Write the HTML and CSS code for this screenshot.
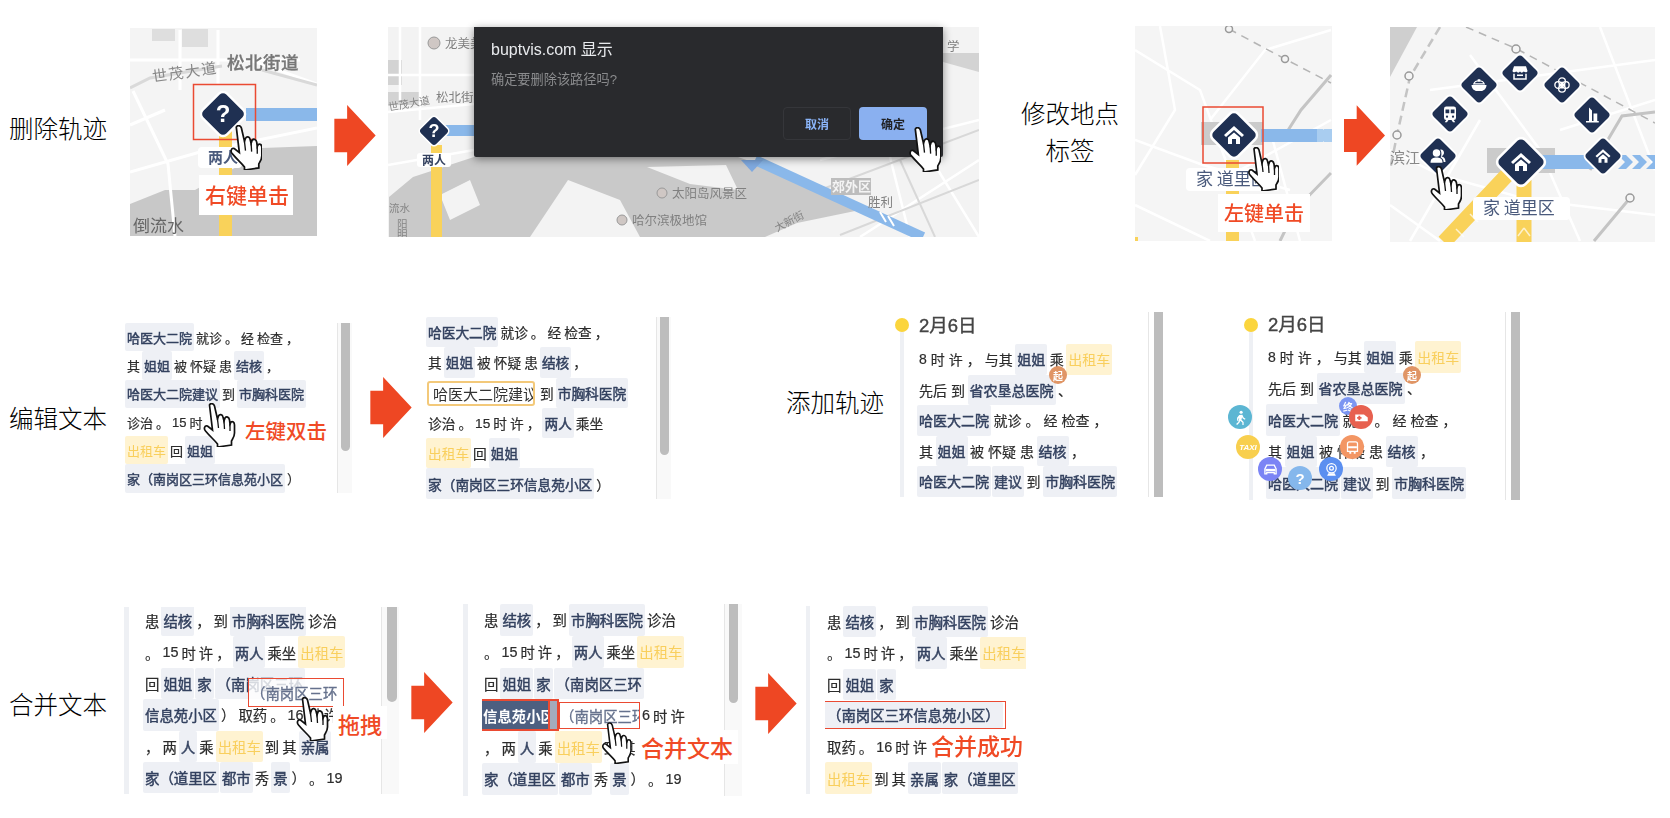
FILE: index.html
```html
<!DOCTYPE html>
<html lang="zh">
<head>
<meta charset="utf-8">
<title>交互说明</title>
<link rel="stylesheet" href="styles.css">
</head>
<body>
<svg class="defs" aria-hidden="true">
  <symbol id="hand" viewBox="0 0 32 44"><path d="M7 2C8 0 11 0 12 3L15 16 16 13C17 11 20 11 20.500 14L21.500 18 22.500 15C24 13 26.500 14 27 17L27.500 21 28.500 19C30 18 32 19 32 22V30C32 34 30 36 29 38V42L15 44V41C12 37 8 34 3 28 1 26 2 22 5 23L10 27Z" fill="#fff" stroke="#111" stroke-width="1.700"/><path d="M15 16 16 25M21.500 18 22 26M27.500 21V28" fill="none" stroke="#111" stroke-width="1.300"/></symbol>
  <symbol id="arrow" viewBox="0 0 42 62"><polygon points="0,14 13,14 13,0 42,31 13,62 13,48 0,48" fill="#ee4723"/></symbol>
  <symbol id="dm" viewBox="-25 -25 50 50"><rect x="-18" y="-18" width="36" height="36" rx="6" transform="rotate(45)" fill="#1f3052" stroke="#fff" stroke-width="2.500"/></symbol>
  <symbol id="i-home" viewBox="0 0 24 24"><path d="M12 3 2 12 4 14 12 7 20 14 22 12ZM6 14.500 12 9.500 18 14.500V21H14V16H10V21H6Z" fill="#fff"/></symbol>
  <symbol id="i-train" viewBox="0 0 24 24"><path d="M7 2H17A3 3 0 0 1 20 5V17A3 3 0 0 1 17 20H7A3 3 0 0 1 4 17V5A3 3 0 0 1 7 2Z" fill="#fff"/><path d="M6 6H11V11H6ZM13 6H18V11H13Z" fill="#1f3052"/><circle cx="8" cy="15.500" r="1.500" fill="#1f3052"/><circle cx="16" cy="15.500" r="1.500" fill="#1f3052"/><path d="M7 20H10L8 23H5ZM14 20H17L19 23H16Z" fill="#fff"/></symbol>
  <symbol id="i-bowl" viewBox="0 0 24 24"><path d="M2 12H22C22 17 18 20 15 20H9C6 20 2 17 2 12Z" fill="#fff"/><path d="M5 10.500C7 5 17 5 19 10.500ZM11 5H13V7H11Z" fill="none" stroke="#fff" stroke-width="1.500"/></symbol>
  <symbol id="i-shop" viewBox="0 0 24 24"><path d="M4 3H20L22 9C22 11 19 12 17 10 15 12 13.500 12 12 10 10.500 12 9 12 7 10 5 12 2 11 2 9Z" fill="#fff"/><path d="M4 13V20H20V13" fill="none" stroke="#fff" stroke-width="2"/><path d="M8 14H16V16H8Z" fill="#fff"/></symbol>
  <symbol id="i-cross" viewBox="0 0 24 24"><circle cx="12" cy="7" r="4.500" fill="none" stroke="#fff" stroke-width="1.800"/><circle cx="12" cy="17" r="4.500" fill="none" stroke="#fff" stroke-width="1.800"/><circle cx="7" cy="12" r="4.500" fill="none" stroke="#fff" stroke-width="1.800"/><circle cx="17" cy="12" r="4.500" fill="none" stroke="#fff" stroke-width="1.800"/><path d="M10.500 7.500H13.500V10.500H16.500V13.500H13.500V16.500H10.500V13.500H7.500V10.500H10.500Z" fill="#fff"/></symbol>
  <symbol id="i-build" viewBox="0 0 24 24"><path d="M8 2 12 6V20H8ZM14 10H19V20H14ZM4 20H21V22H4Z" fill="#fff"/></symbol>
  <symbol id="i-people" viewBox="0 0 24 24"><circle cx="10" cy="8" r="5" fill="#fff"/><path d="M2 21C2 15 6 14 10 14S18 15 18 21Z" fill="#fff"/><path d="M15 3.500C18 3 20 5 20 8 20 10 18 12 16.500 12.500 20 13 22 15 22 20H19.500C19.500 17 18 15 15.500 13.500 17 11.500 17 6 15 3.500Z" fill="#fff"/></symbol>
  <symbol id="i-walk" viewBox="0 0 24 24"><circle cx="13" cy="3.500" r="2.500" fill="#fff"/><path d="M10 8 15 7.500 17 12 20 14 19 15.500 15.500 13.500 14.500 11.500 13.500 15.500 17 19V24H15V20L11.500 17 10.500 20 6.500 24 5 22.500 8.500 19 10 13 8.500 14V17H6.500V12.500Z" fill="#fff"/></symbol>
  <symbol id="i-car" viewBox="0 0 24 24"><path d="M6 5H18L21 11V19H18V17H6V19H3V11Z" fill="none" stroke="#fff" stroke-width="2"/><path d="M4 11H20V15H4Z" fill="#fff"/></symbol>
  <symbol id="i-rail" viewBox="0 0 24 24"><circle cx="12" cy="10" r="7.500" fill="none" stroke="#fff" stroke-width="2"/><circle cx="12" cy="10" r="3" fill="none" stroke="#fff" stroke-width="2"/><path d="M7 18H17L19 22H5Z" fill="#fff"/></symbol>
  <symbol id="i-bus" viewBox="0 0 24 24"><path d="M7 3H17A3 3 0 0 1 20 6V18H4V6A3 3 0 0 1 7 3Z" fill="none" stroke="#fff" stroke-width="2"/><path d="M5 10H19V13H5ZM7 19H10V22H7ZM14 19H17V22H14Z" fill="#fff"/></symbol>
  <symbol id="i-amb" viewBox="0 0 24 24"><path d="M2 7H16L22 12V18H2Z" fill="#fff"/><path d="M7 9H10V11H12V14H10V16H7V14H5V11H7Z" fill="#e7604f"/></symbol>
</svg>

<main class="figure">
  <section class="row row-top">
    <h2 class="label l-del">删除轨迹</h2>
    <svg class="map map-1" viewBox="130 28 187 208" role="img">
      <rect x="130" y="28" width="187" height="208" fill="#f4f4f4"/>
      <path d="M152 29H175V41H152ZM182 29H208V47H182Z" fill="#dedede"/>
      <path d="M317 146 262 148 240 165 195 190 165 190 130 204V236H317Z" fill="#c8c8c8"/>
      <path d="M133 91 168 164 175 236M130 172 200 152 317 128M130 125 165 110M180 30V90M218 30V84M130 60H300M250 60 317 84" fill="none" stroke="#fff" stroke-width="3"/>
      <path d="M130 88 150 78 222 66M262 70 317 85" fill="none" stroke="#d9d9d9" stroke-width="3"/>
      <text class="m-t m-strong" x="227" y="69">松北街道</text>
      <text class="m-t m-road" x="153" y="82" transform="rotate(-8 153 82)">世茂大道</text>
      <text class="m-t m-water" x="133" y="232">倒流水</text>
      <rect x="246" y="108" width="71" height="13" fill="#8ab8ea"/>
      <rect x="219" y="130" width="13" height="106" fill="#f9d25a"/>
      <use href="#dm" x="199" y="90" width="48" height="48"/>
      <text class="m-q" x="223" y="122">?</text>
      <rect x="198" y="147" width="44" height="21" rx="4" fill="#fff"/>
      <text class="m-chip" x="208" y="163">两人</text>
      <rect x="193.500" y="84.500" width="62" height="55" class="redbox"/>
      <use href="#hand" x="229" y="125" width="33" height="45"/>
      <rect x="199" y="175" width="94" height="40" fill="#fff"/>
      <text class="m-call" x="205" y="203">右键单击</text>
    </svg>
    <svg class="arrow a-1"><use href="#arrow"/></svg>
    <div class="map-wrap map-2">
      <svg class="map-fill" viewBox="388 27 591 210" role="img">
        <rect x="388" y="27" width="591" height="210" fill="#f3f3f3"/>
        <path d="M389 197 413 177 474 157H738L825 187 860 210 797 223 765 237H389Z" fill="#c9c9c9"/>
        <path d="M943 53H979V72L943 62ZM388 60H402V85H388ZM388 92H420V105H388Z" fill="#d3d3d3"/>
        <path d="M568 180 620 200 640 237H530ZM647 167 726 165 738 190 690 184ZM440 195 470 180 480 205 450 220Z" fill="#f3f3f3"/>
        <path d="M388 75H474M388 112 474 104M400 27V100M420 27V120M388 165 474 150M820 160 979 120M860 237 979 160M930 157 979 237M890 157 910 237" fill="none" stroke="#fff" stroke-width="2.500"/>
        <path d="M820 190 979 130M840 235 979 180M900 160 935 237" fill="none" stroke="#d8d8d8" stroke-width="2"/>
        <rect x="444" y="125" width="40" height="11" fill="#8ab8ea"/>
        <rect x="431" y="145" width="11" height="92" fill="#f9d25a"/>
        <path d="M755 160 923 237" stroke="#8ab8ea" stroke-width="10" fill="none"/>
        <path d="M880 212 886 222M888 216 894 226" stroke="#fff" stroke-width="2" fill="none"/>
        <path d="M741 160H763L752 172Z" fill="#7fa9df"/>
        <circle cx="434" cy="43" r="6" fill="#cfc7c4" stroke="#999"/>
        <text class="m-t m-small" x="445" y="48">龙美美</text>
        <text class="m-t m-small" x="436" y="102">松北街</text>
        <text class="m-t m-mini" x="389" y="111" transform="rotate(-10 389 111)">世茂大道</text>
        <text class="m-t m-mini" x="389" y="212">流水</text>
        <text class="m-t m-mini" x="397" y="228">阳</text>
        <text class="m-t m-mini" x="397" y="238">明</text>
        <text class="m-t m-small" x="947" y="51">学</text>
        <circle cx="662" cy="193" r="5" fill="#cfc7c4" stroke="#999"/>
        <text class="m-t m-small" x="672" y="198">太阳岛风景区</text>
        <circle cx="622" cy="220" r="5" fill="#cfc7c4" stroke="#999"/>
        <text class="m-t m-small" x="632" y="225">哈尔滨极地馆</text>
        <rect x="831" y="178" width="40" height="17" fill="#bdbdbd"/>
        <text class="m-t m-white" x="832" y="191">郊外区</text>
        <text class="m-t m-small" x="868" y="207">胜利</text>
        <text class="m-t m-mini" x="777" y="232" transform="rotate(-28 777 232)">大新街</text>
        <use href="#dm" x="418" y="115" width="32" height="32"/>
        <text class="m-q m-q-sm" x="434" y="137">?</text>
        <rect x="417" y="153" width="34" height="14" rx="3" fill="#fff"/>
        <text class="m-chip m-chip-sm" x="422" y="165">两人</text>
      </svg>
      <div class="dialog">
        <div class="dlg-title">buptvis.com 显示</div>
        <div class="dlg-msg">确定要删除该路径吗?</div>
        <div class="dlg-actions">
          <span class="btn btn-ghost">取消</span>
          <span class="btn btn-ok">确定</span>
        </div>
      </div>
      <svg class="hand hand-dlg"><use href="#hand"/></svg>
    </div>
    <h2 class="label l-place">修改地点<br>标签</h2>
    <svg class="map map-3" viewBox="1135 26 197 215" role="img">
      <rect x="1135" y="26" width="197" height="215" fill="#f5f5f5"/>
      <path d="M1135 50 1200 90 1255 241M1160 26 1175 110 1135 175M1210 120 1265 50 1331 30M1135 140 1203 165 1290 190M1240 170 1331 120M1270 130 1300 241M1135 205 1210 241" fill="none" stroke="#fff" stroke-width="2.500"/>
      <path d="M1229 29 1285 59 1331 83" fill="none" stroke="#b5b5b5" stroke-width="1.500" stroke-dasharray="8 6"/>
      <path d="M1331 75 1301 110 1285 135M1331 173 1295 210 1280 241" fill="none" stroke="#c4c4c4" stroke-width="3"/>
      <circle cx="1229" cy="29" r="3.500" fill="#f5f5f5" stroke="#999" stroke-width="1.500"/>
      <circle cx="1285" cy="59" r="3.500" fill="#f5f5f5" stroke="#999" stroke-width="1.500"/>
      <rect x="1201" y="122" width="62" height="23" fill="#cbcbcb"/>
      <rect x="1261" y="129" width="56" height="13" fill="#8ab8ea"/>
      <path d="M1317 129H1323L1329 135.500 1323 142H1317ZM1324 129H1332V142H1324Z" fill="#a9cdf0"/>
      <rect x="1226" y="160" width="13" height="81" fill="#f9d25a"/>
      <rect x="1135" y="237" width="3" height="4" fill="#f9d25a"/>
      <rect x="1186" y="168" width="94" height="23" rx="4" fill="#fff"/>
      <text class="m-chip m-chip-reg" x="1196" y="185">家 道里区</text>
      <use href="#dm" x="1209" y="110" width="50" height="50"/>
      <use href="#i-home" x="1222" y="123" width="24" height="24"/>
      <rect x="1203" y="107" width="60" height="56" class="redbox"/>
      <use href="#hand" x="1247" y="147" width="32" height="44"/>
      <rect x="1218" y="194" width="92" height="38" fill="#fff"/>
      <text class="m-call m-call-sm" x="1224" y="221">左键单击</text>
    </svg>
    <svg class="arrow a-2"><use href="#arrow"/></svg>
    <svg class="map map-4" viewBox="1390 27 265 215" role="img">
      <rect x="1390" y="27" width="265" height="215" fill="#f5f5f5"/>
      <path d="M1390 27H1417L1390 77Z" fill="#cfcfcf"/>
      <path d="M1390 150 1440 175 1530 200 1655 215M1470 55 1540 150 1580 241M1600 27 1655 170M1430 90 1655 60M1390 205 1440 241M1480 120 1410 241M1560 130 1655 100" fill="none" stroke="#fff" stroke-width="2.500"/>
      <path d="M1440 27 1410 77 1397 135 1390 170" fill="none" stroke="#c4c4c4" stroke-width="2.500" stroke-dasharray="9 5"/>
      <path d="M1466 27 1517 49 1655 123" fill="none" stroke="#b5b5b5" stroke-width="1.500" stroke-dasharray="8 6"/>
      <path d="M1655 112 1622 116 1590 170M1630 198 1594 241" fill="none" stroke="#c4c4c4" stroke-width="3"/>
      <circle cx="1409" cy="76" r="4" fill="#f5f5f5" stroke="#999" stroke-width="1.500"/>
      <circle cx="1397" cy="135" r="4" fill="#f5f5f5" stroke="#999" stroke-width="1.500"/>
      <circle cx="1516" cy="49" r="4" fill="#f5f5f5" stroke="#999" stroke-width="1.500"/>
      <circle cx="1630" cy="198" r="4" fill="#f5f5f5" stroke="#999" stroke-width="1.500"/>
      <text class="m-t m-bin" x="1390" y="163">滨江</text>
      <rect x="1487" y="148" width="68" height="25" fill="#cbcbcb"/>
      <rect x="1540" y="155" width="70" height="14" fill="#8ab8ea"/>
      <path d="M1618 155H1626L1633 162 1626 169H1618L1625 162ZM1632 155H1640L1647 162 1640 169H1632L1639 162ZM1646 155H1655V169H1646L1653 162Z" fill="#8ab8ea"/>
      <path d="M1507 175 1444 242M1524 180V242" fill="none" stroke="#f9d25a" stroke-width="15"/>
      <path d="M1470 214 1478 222M1456 229 1464 237M1524 228 1518 236M1524 228 1530 236" stroke="#fff" stroke-width="1.500" fill="none" opacity=".7"/>
      <rect x="1473" y="197" width="97" height="23" rx="4" fill="#fff"/>
      <text class="m-chip m-chip-reg" x="1483" y="214">家 道里区</text>
      <use href="#dm" x="1418" y="136" width="40" height="40"/><use href="#i-people" x="1429" y="147" width="18" height="18"/>
      <use href="#dm" x="1430" y="94" width="40" height="40"/><use href="#i-train" x="1441" y="105" width="18" height="18"/>
      <use href="#dm" x="1459" y="65" width="40" height="40"/><use href="#i-bowl" x="1470" y="76" width="18" height="18"/>
      <use href="#dm" x="1500" y="53" width="40" height="40"/><use href="#i-shop" x="1511" y="64" width="18" height="18"/>
      <use href="#dm" x="1542" y="65" width="40" height="40"/><use href="#i-cross" x="1553" y="76" width="18" height="18"/>
      <use href="#dm" x="1572" y="95" width="40" height="40"/><use href="#i-build" x="1583" y="106" width="18" height="18"/>
      <use href="#dm" x="1583" y="136" width="40" height="40"/><use href="#i-home" x="1594" y="147" width="18" height="18"/>
      <use href="#dm" x="1495" y="136" width="52" height="52"/><use href="#i-home" x="1509" y="150" width="24" height="24"/>
      <use href="#hand" x="1429" y="166" width="33" height="44"/>
    </svg>
  </section>

  <section class="row row-mid">
    <h2 class="label l-edit">编辑文本</h2>
    <div class="panel panel-a">
      <div class="lines">
        <div class="ln"><b class="c">哈医大二院</b><span>就诊</span><span>。</span><span>经</span><span>检查</span><span>，</span></div>
        <div class="ln"><span>其</span><b class="c">姐姐</b><span>被</span><span>怀疑</span><span>患</span><b class="c">结核</b><span>，</span></div>
        <div class="ln"><b class="c">哈医大二院建议</b><span>到</span><b class="c">市胸科医院</b></div>
        <div class="ln"><span>诊治</span><span>。</span><span>15</span><span>时</span></div>
        <div class="ln"><i class="y">出租车</i><span>回</span><b class="c">姐姐</b></div>
        <div class="ln"><b class="c">家（南岗区三环信息苑小区</b><span>）</span></div>
      </div>
      <div class="scroll"><div class="thumb thumb-a"></div></div>
      <svg class="hand hand-a"><use href="#hand"/></svg>
      <div class="call call-a">左键双击</div>
    </div>
    <svg class="arrow a-3"><use href="#arrow"/></svg>
    <div class="panel panel-b">
      <div class="lines">
        <div class="ln"><b class="c">哈医大二院</b><span>就诊</span><span>。</span><span>经</span><span>检查</span><span>，</span></div>
        <div class="ln"><span>其</span><b class="c">姐姐</b><span>被</span><span>怀疑</span><span>患</span><b class="c">结核</b><span>，</span></div>
        <div class="ln"><div class="input"><span>哈医大二院建议</span></div><span>到</span><b class="c">市胸科医院</b></div>
        <div class="ln"><span>诊治</span><span>。</span><span>15</span><span>时</span><span>许</span><span>，</span><b class="c">两人</b><span>乘坐</span></div>
        <div class="ln"><i class="y">出租车</i><span>回</span><b class="c">姐姐</b></div>
        <div class="ln"><b class="c">家（南岗区三环信息苑小区</b><span>）</span></div>
      </div>
      <div class="scroll"><div class="thumb thumb-b"></div></div>
    </div>
    <h2 class="label l-add">添加轨迹</h2>
    <div class="panel panel-c">
      <div class="rail"><i class="dot"></i></div>
      <div class="lines">
        <div class="date">2月6日</div>
        <div class="ln"><span>8</span><span>时</span><span>许</span><span>，</span><span>与其</span><b class="c">姐姐</b><span>乘</span><i class="y">出租车</i></div>
        <div class="ln"><span>先后</span><span>到</span><b class="c">省农垦总医院</b><span>、</span></div>
        <div class="ln"><b class="c">哈医大二院</b><span>就诊</span><span>。</span><span>经</span><span>检查</span><span>，</span></div>
        <div class="ln"><span>其</span><b class="c">姐姐</b><span>被</span><span>怀疑</span><span>患</span><b class="c">结核</b><span>，</span></div>
        <div class="ln"><b class="c">哈医大二院</b><b class="c">建议</b><span>到</span><b class="c">市胸科医院</b></div>
      </div>
      <div class="bar"></div>
      <span class="bub bub-sm b-qi-c">起</span>
    </div>
    <div class="panel panel-d">
      <div class="rail"><i class="dot"></i></div>
      <div class="lines">
        <div class="date">2月6日</div>
        <div class="ln"><span>8</span><span>时</span><span>许</span><span>，</span><span>与其</span><b class="c">姐姐</b><span>乘</span><i class="y">出租车</i></div>
        <div class="ln"><span>先后</span><span>到</span><b class="c">省农垦总医院</b><span>、</span></div>
        <div class="ln"><b class="c">哈医大二院</b><span>就诊</span><span>。</span><span>经</span><span>检查</span><span>，</span></div>
        <div class="ln"><span>其</span><b class="c">姐姐</b><span>被</span><span>怀疑</span><span>患</span><b class="c">结核</b><span>，</span></div>
        <div class="ln"><b class="c">哈医大二院</b><b class="c">建议</b><span>到</span><b class="c">市胸科医院</b></div>
      </div>
      <div class="bar"></div>
      <span class="bub bub-sm b-qi-d">起</span>
      <span class="bub bub-sm b-zhong">终</span>
      <span class="bub b-amb"><svg><use href="#i-amb"/></svg></span>
      <span class="bub b-walk"><svg><use href="#i-walk"/></svg></span>
      <span class="bub b-taxi">TAXI</span>
      <span class="bub b-bus"><svg><use href="#i-bus"/></svg></span>
      <span class="bub b-car"><svg><use href="#i-car"/></svg></span>
      <span class="bub b-rail"><svg><use href="#i-rail"/></svg></span>
      <span class="bub b-q">?</span>
    </div>
  </section>

  <section class="row row-low">
    <h2 class="label l-merge">合并文本</h2>
    <div class="panel panel-e">
      <div class="track"></div>
      <div class="lines">
        <div class="ln"><span>患</span><b class="c">结核</b><span>，</span><span>到</span><b class="c">市胸科医院</b><span>诊治</span></div>
        <div class="ln"><span>。</span><span>15</span><span>时</span><span>许</span><span>，</span><b class="c">两人</b><span>乘坐</span><i class="y">出租车</i></div>
        <div class="ln"><span>回</span><b class="c">姐姐</b><b class="c">家</b><b class="c">（南岗区三环</b></div>
        <div class="ln"><b class="c">信息苑小区</b><span>）</span><span>取药</span><span>。</span><span>16</span><span>时</span><span>许</span></div>
        <div class="ln"><span>，</span><span>两</span><b class="c">人</b><span>乘</span><i class="y">出租车</i><span>到</span><span>其</span><b class="c">亲属</b></div>
        <div class="ln"><b class="c">家（道里区</b><b class="c">都市</b><span>秀</span><b class="c">景</b><span>）</span><span>。</span><span>19</span></div>
      </div>
      <div class="scroll"><div class="thumb thumb-e"></div></div>
      <div class="ghost ghost-e">（南岗区三环</div>
      <svg class="hand hand-e"><use href="#hand"/></svg>
      <div class="call call-e">拖拽</div>
    </div>
    <svg class="arrow a-4"><use href="#arrow"/></svg>
    <div class="panel panel-f">
      <div class="track"></div>
      <div class="lines">
        <div class="ln"><span>患</span><b class="c">结核</b><span>，</span><span>到</span><b class="c">市胸科医院</b><span>诊治</span></div>
        <div class="ln"><span>。</span><span>15</span><span>时</span><span>许</span><span>，</span><b class="c">两人</b><span>乘坐</span><i class="y">出租车</i></div>
        <div class="ln"><span>回</span><b class="c">姐姐</b><b class="c">家</b><b class="c">（南岗区三环</b></div>
        <div class="ln ln-sel"><div class="sel-box"><b class="sel">信息苑小区</b><i class="sel-bar"></i></div><div class="ghost-f">（南岗区三环</div><span>6</span><span>时</span><span>许</span></div>
        <div class="ln"><span>，</span><span>两</span><b class="c">人</b><span>乘</span><i class="y">出租车</i><span>到</span><span>其</span><b class="c">亲属</b></div>
        <div class="ln"><b class="c">家（道里区</b><b class="c">都市</b><span>秀</span><b class="c">景</b><span>）</span><span>。</span><span>19</span></div>
      </div>
      <div class="scroll"><div class="thumb thumb-f"></div></div>
      <svg class="hand hand-f"><use href="#hand"/></svg>
      <div class="call call-f">合并文本</div>
    </div>
    <svg class="arrow a-5"><use href="#arrow"/></svg>
    <div class="panel panel-g">
      <div class="track"></div>
      <div class="lines">
        <div class="ln"><span>患</span><b class="c">结核</b><span>，</span><span>到</span><b class="c">市胸科医院</b><span>诊治</span></div>
        <div class="ln"><span>。</span><span>15</span><span>时</span><span>许</span><span>，</span><b class="c">两人</b><span>乘坐</span><i class="y">出租车</i></div>
        <div class="ln"><span>回</span><b class="c">姐姐</b><b class="c">家</b></div>
        <div class="ln"><div class="merged"><b class="c">（南岗区三环信息苑小区）</b></div></div>
        <div class="ln"><span>取药</span><span>。</span><span>16</span><span>时</span><span>许</span></div>
        <div class="ln"><i class="y">出租车</i><span>到</span><span>其</span><b class="c">亲属</b><b class="c">家（道里区</b></div>
      </div>
      <div class="call call-g">合并成功</div>
    </div>
  </section>
</main>
</body>
</html>
```

FILE: styles.css
```css
* { box-sizing: border-box; }
html, body { margin: 0; background: #fff; }
body {
  width: 1670px;
  height: 818px;
  overflow: hidden;
  font-family: "Liberation Sans", "Noto Sans CJK SC", sans-serif;
  color: #3a3a3a;
}
.defs { position: absolute; width: 0; height: 0; }
.figure { padding-top: 26px; }
.row { display: flex; align-items: flex-start; }
.row > * { flex: none; }
.row-top { height: 286px; }
.row-mid { height: 292px; }
.row-low { height: 214px; }

/* section labels */
.label {
  margin: 0;
  font-family: "Noto Sans CJK SC", sans-serif;
  font-size: 24.500px;
  font-weight: 300;
  line-height: 34px;
  color: #000;
  white-space: nowrap;
}
.l-del { margin: 85px 0 0 9px; width: 98px; }
.l-place { margin: 68px 0 0 42px; width: 98px; line-height: 37px; text-align: center; }
.l-edit { margin: 89px 0 0 9px; width: 98px; }
.l-add { margin: 73px 0 0 115px; width: 98px; }
.l-merge { margin: 83px 0 0 9px; width: 98px; }

/* arrows */
.arrow { width: 42px; height: 61px; }
.a-1 { margin: 79px 0 0 17px; }
.a-2 { margin: 79px 0 0 12px; width: 41px; }
.a-3 { margin: 65px 0 0 18px; }
.a-4 { margin: 68px 0 0 12px; }
.a-5 { margin: 69px 0 0 13px; }

/* map pictures */
.map, .map-fill { display: block; filter: blur(.6px); }
.map-1 { margin: 2px 0 0 23px; width: 187px; height: 208px; }
.map-wrap { position: relative; }
.map-2 { margin: 1px 0 0 12px; width: 591px; height: 210px; }
.map-fill { width: 100%; height: 100%; }
.map-3 { margin: 0 0 0 16px; width: 197px; height: 215px; }
.map-4 { margin: 1px 0 0 5px; width: 265px; height: 215px; }
.map text, .map-fill text { font-family: "Noto Sans CJK SC", sans-serif; }
.m-t { fill: #777; }
.m-strong { font-size: 17.500px; font-weight: 500; letter-spacing: .5px; stroke: #777; stroke-width: .3px; }
.m-road { font-size: 15px; fill: #888; letter-spacing: 1.500px; }
.m-water { font-size: 17px; fill: #666; }
.m-small { font-size: 12.5px; fill: #808080; }
.m-mini { font-size: 10.500px; fill: #858585; }
.m-white { font-size: 13px; fill: #f4f4f4; font-weight: 700; }
.m-bin { font-size: 15px; fill: #888; }
.map .m-q, .map-fill .m-q { fill: #fff; font-family: "Liberation Sans", sans-serif; font-size: 24px; font-weight: 700; text-anchor: middle; }
.map-fill .m-q-sm { font-size: 18px; }
.m-chip { fill: #4a5a7c; font-size: 15px; font-weight: 700; }
.m-chip-sm { font-size: 12px; fill: #33415f; }
.m-chip-reg { font-size: 17px; font-weight: 400; }
.m-call { fill: #f04a25; font-size: 21px; font-weight: 500; }
.m-call-sm { font-size: 20px; }
.redbox { fill: none; stroke: #ea4a32; stroke-width: 1.500; }

/* browser dialog */
.dialog {
  position: absolute;
  left: 86px;
  top: 0;
  width: 469px;
  height: 130px;
  padding: 13px 16px 0 17px;
  background: #292a2d;
  border-radius: 0 0 2px 2px;
  box-shadow: 0 2px 8px rgba(0, 0, 0, .45);
  filter: blur(.35px);
}
.dlg-title { font-size: 16px; line-height: 20px; color: #e8eaed; }
.dlg-msg { margin-top: 11px; font-size: 13.200px; line-height: 18px; color: #8a8b8d; }
.dlg-actions { display: flex; justify-content: flex-end; gap: 8px; margin-top: 18px; }
.btn {
  width: 68px;
  height: 33px;
  border-radius: 4px;
  display: flex;
  align-items: center;
  justify-content: center;
  font-size: 12px;
  font-weight: 700;
}
.btn-ghost { color: #8ab4f8; border: 1px solid #35363a; }
.btn-ok { color: #202124; background: #8ab0f0; }

/* pointer cursors */
.hand { position: absolute; display: block; z-index: 3; }
.hand-dlg { left: 520px; top: 100px; width: 33px; height: 45px; }
.hand-a { left: 75px; top: 80px; width: 37px; height: 44px; }
.hand-e { left: 169px; top: 92px; width: 37px; height: 44px; }
.hand-f { left: 138px; top: 118px; width: 30px; height: 42px; }

/* text panels */
.panel {
  --pad: 1px;
  position: relative;
  display: flex;
  align-items: flex-start;
  font-size: var(--fs);
  filter: blur(.4px);
}
.lines { flex: 1; min-width: 0; overflow: hidden; height: 100%; }
.ln { display: flex; gap: 1px; height: var(--lh); align-items: stretch; white-space: nowrap; }
.ln > span {
  display: flex;
  align-items: center;
  padding: 0 var(--pad);
  font-weight: 400;
  color: #2c2c2c;
  -webkit-text-stroke: .2px #2c2c2c;
}
.ln > span:first-child { padding-left: 2px; }
.c, .y {
  display: flex;
  align-items: center;
  padding: 0 2px;
  font-style: normal;
  font-weight: 400;
  border-radius: 2px;
}
.c { background: #eef0f5; color: #33415f; -webkit-text-stroke: .45px #33415f; }
.y { background: #fff3d1; color: #f9cf5d; }

.panel-a { --fs: 13px; --lh: 28.300px; margin: 11px 0 0 18px; width: 227px; height: 170px; }
.panel-b { --fs: 13.700px; --lh: 30.300px; margin: 5px 0 0 14px; width: 245px; height: 182px; }
.panel-c { --fs: 14px; --lh: 30.500px; --pad: 1.500px; margin: 0 0 0 11px; width: 268px; height: 185px; }
.panel-d { --fs: 14px; --lh: 31.500px; --pad: 1.500px; margin: 0 0 0 81px; width: 276px; height: 188px; }
.panel-e { --fs: 14.400px; --lh: 31.400px; margin: 1px 0 0 17px; width: 275px; height: 189px; }
.panel-f { --fs: 14.400px; --lh: 31.800px; margin: 0 0 0 10px; width: 279px; height: 192px; }
.panel-g { --fs: 14.400px; --lh: 31.300px; margin: 2px 0 0 9px; width: 220px; height: 188px; }
.panel-e .lines { clip-path: inset(2px 0 0 0); }

.scroll {
  flex: none;
  display: flex;
  justify-content: flex-end;
  height: 100%;
  width: 15px;
  padding-right: 2px;
  border-left: 1px solid #e6e6e6;
  background: #f9f9f9;
}
.thumb { width: 9px; background: #bdbdbd; border-radius: 0 0 5px 5px; }
.thumb-a { height: 128px; }
.thumb-b { height: 138px; }
.thumb-e { height: 95px; width: 10px; }
.thumb-f { height: 99px; width: 9px; }
.panel-e .scroll { width: 18px; height: calc(100% - 2px); margin-top: 2px; }
.panel-f .scroll { width: 18px; padding-right: 4px; }

.track { flex: none; width: 5px; height: 100%; background: #eef0f4; margin-right: 14px; }
.panel-e .track { height: calc(100% - 2px); margin-top: 2px; }
.panel-g .track { width: 4px; margin-right: 15px; }

/* timeline panels */
.rail { position: relative; flex: none; width: 14px; height: 100%; margin-right: 8px; }
.rail::before {
  content: "";
  position: absolute;
  left: 5px;
  top: 13px;
  bottom: 0;
  width: 4px;
  background: #eef0f4;
}
.dot {
  position: absolute;
  left: 0;
  top: 6px;
  width: 14px;
  height: 14px;
  border-radius: 50%;
  background: #fbd53d;
}
.date {
  height: 32px;
  padding: 0 0 5px 2px;
  font-size: 18.500px;
  line-height: 27px;
  font-weight: 400;
  color: #444;
  -webkit-text-stroke: .4px #444;
}
.panel-d .date { height: 29px; line-height: 25px; }
.bar {
  flex: none;
  width: 15px;
  height: 100%;
  border-left: 1px solid #e6e6e6;
  background: linear-gradient(to right, #fff 5px, #bdbdbd 5px);
}

/* floating badges */
.bub {
  position: absolute;
  display: flex;
  align-items: center;
  justify-content: center;
  width: 24px;
  height: 24px;
  border-radius: 50%;
  color: #fff;
  font-size: 13px;
  font-weight: 700;
}
.bub svg { width: 15px; height: 15px; display: block; }
.bub-sm { width: 18px; height: 18px; font-size: 10px; }
.b-qi-c { left: 154px; top: 54px; background: #e09565; }
.b-qi-d { left: 159px; top: 54px; background: #e09565; }
.b-zhong { left: 95px; top: 85px; background: #7c96f2; }
.b-amb { left: 105px; top: 93px; background: #e7604f; }
.b-walk { left: -16px; top: 93px; background: #5cb6d3; }
.b-taxi { left: -8px; top: 123px; background: #f8cf4e; font-size: 8px; font-style: italic; }
.b-bus { left: 96px; top: 123px; background: #f39664; }
.b-car { left: 14px; top: 145px; background: #7b84f5; }
.b-rail { left: 75px; top: 145px; background: #5b8ff0; }
.b-q { left: 44px; top: 154px; background: #85b7ec; font-size: 15px; }

/* orange editor */
.input {
  flex: none;
  display: flex;
  align-items: center;
  width: 108px;
  height: 25px;
  margin: 3px 3px 0 1px;
  padding: 0 4px;
  overflow: hidden;
  border: 2px solid #f3c97a;
  border-radius: 3px;
  background: #fff;
  font-size: 15px;
  color: #333;
}
.input span { white-space: nowrap; }

/* drag and merge marks */
.ghost {
  position: absolute;
  border: 1.500px solid #ea4a32;
  background: rgba(255, 255, 255, .8);
  color: #66728d;
  -webkit-text-stroke: .35px #66728d;
  display: flex;
  align-items: center;
  white-space: nowrap;
}
.ghost-e { left: 124px; top: 73px; width: 96px; height: 29px; padding-left: 2px; }
.ln-sel { align-items: center; }
.sel-box {
  display: flex;
  height: 32px;
  margin-left: -3px;
  border: 2px solid #ea4a32;
  flex: none;
}
.sel {
  display: flex;
  align-items: center;
  width: 67px;
  padding-left: 2px;
  overflow: hidden;
  background: #4d5f80;
  color: #fff;
  white-space: nowrap;
}
.sel-bar { width: 9px; background: #a4acbc; border-left: 2px solid #ea4a32; }
.ghost-f {
  display: flex;
  align-items: center;
  flex: none;
  width: 81px;
  height: 27px;
  margin-left: -1px;
  overflow: hidden;
  border: 1.500px solid #ea4a32;
  background: #fff;
  color: #66728d;
  -webkit-text-stroke: .35px #66728d;
  white-space: nowrap;
}
.merged {
  display: flex;
  align-items: stretch;
  height: 28px;
  margin: 1px 0 0 -4px;
  padding: 0 2px;
  border: 1.500px solid #ea4a32;
}
.merged .c { padding: 0 3px; }

/* callouts */
.call {
  position: absolute;
  display: flex;
  align-items: center;
  justify-content: center;
  color: #f04a25;
  background: #fff;
  font-family: "Noto Sans CJK SC", sans-serif;
  font-weight: 500;
  white-space: nowrap;
  z-index: 2;
}
.call-a { left: 117px; top: 92px; width: 88px; height: 30px; font-size: 20.500px; }
.call-e { left: 209px; top: 101px; width: 54px; height: 33px; font-size: 22px; }
.call-f { left: 173px; top: 126px; width: 102px; height: 34px; font-size: 23px; }
.call-g { left: 124px; top: 124px; width: 94px; height: 30px; font-size: 23px; background: transparent; }
```
